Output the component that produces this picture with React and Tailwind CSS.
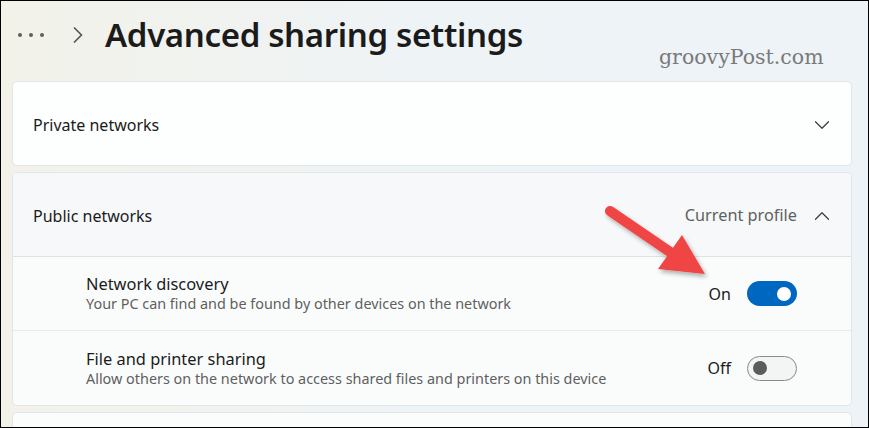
import { ChevronDown, ChevronUp, ChevronRight } from 'lucide-react';

const font = { fontFamily: '"Noto Sans", "Open Sans", sans-serif' };

function Toggle({ on }) {
  if (on) {
    return (
      <div className="flex h-[25px] w-[50px] items-center justify-end rounded-full bg-[#0067c0] pr-[6px]">
        <div className="h-[14px] w-[14px] rounded-full bg-white" />
      </div>
    );
  }
  return (
    <div className="flex h-[25px] w-[50px] items-center rounded-full border border-[#8a8a8a] bg-[#f3f4f4] pl-[5px]">
      <div className="h-[14px] w-[14px] rounded-full bg-[#5c5c5c]" />
    </div>
  );
}

function SettingRow({ title, desc, state, on, last }) {
  return (
    <div className={`flex h-[74px] items-center pl-[73px] pr-[54px] ${last ? '' : 'border-b border-[#e6e8ea]'}`}>
      <div className="flex-1">
        <p className="text-[16.4px] leading-[21px] text-[#1b1b1b]">{title}</p>
        <p className="text-[14.4px] leading-[20px] text-[#5f5f5f]">{desc}</p>
      </div>
      <span className="mr-[16px] text-[16px] text-[#1b1b1b]">{state}</span>
      <Toggle on={on} />
    </div>
  );
}

export default function App() {
  return (
    <div
      className="relative h-[428px] w-[869px] overflow-hidden border border-black bg-gradient-to-r from-[#f2f2e9] via-[#eef3f6] to-[#edf3f7]"
      style={font}
    >
      {/* header */}
      <div className="flex h-[74px] items-center pb-[6px] pl-[17px]">
        <div className="flex items-center gap-[7px]">
          <span className="h-[4px] w-[4px] rounded-full bg-[#5f5f5f]" />
          <span className="h-[4px] w-[4px] rounded-full bg-[#5f5f5f]" />
          <span className="h-[4px] w-[4px] rounded-full bg-[#5f5f5f]" />
        </div>
        <ChevronRight className="ml-[20px] text-[#555]" size={28} strokeWidth={1.5} />
        <h1 className="ml-[13px] text-[33px] font-semibold tracking-[-0.35px] text-[#1b1b1b]">Advanced sharing settings</h1>
      </div>
      <div
        className="absolute left-[658px] top-[41px] text-[20.5px] text-[#7a7a7a]"
        style={{ fontFamily: '"DejaVu Serif", "Liberation Serif", serif' }}
      >
        groovyPost.com
      </div>

      <div className="flex flex-col gap-[6px] pl-[11px] pr-[16px] pt-[6px]">
        {/* private */}
        <div className="flex h-[85px] items-center justify-between rounded-[5px] border border-[#e3e6e8] bg-[#fdfefe] pl-[20px] pr-[16px] pt-[3px]">
          <span className="text-[16px] text-[#1b1b1b]">Private networks</span>
          <ChevronDown size={26} strokeWidth={1.1} className="text-[#3a3a3a]" />
        </div>

        {/* public */}
        <div className="overflow-hidden rounded-[5px] border border-[#e3e6e8] bg-[#fafcfc]">
          <div className="flex h-[84px] items-center border-b border-[#dfe2e4] bg-[#f6f8f9] pl-[20px] pr-[16px] pt-[2px]">
            <span className="flex-1 text-[16px] text-[#1b1b1b]">Public networks</span>
            <span className="mr-[12px] text-[16.3px] text-[#5f5f5f]">Current profile</span>
            <ChevronUp size={26} strokeWidth={1.1} className="text-[#3a3a3a]" />
          </div>
          <SettingRow
            title="Network discovery"
            desc="Your PC can find and be found by other devices on the network"
            state="On"
            on
          />
          <SettingRow
            title="File and printer sharing"
            desc="Allow others on the network to access shared files and printers on this device"
            state="Off"
            last
          />
        </div>

        <div className="h-[40px] rounded-[5px] border border-[#e3e6e8] bg-[#fbfcfc]" />
      </div>

      {/* red arrow */}
      <svg className="absolute left-0 top-0" width="869" height="428" viewBox="0 0 869 428">
        <defs>
          <filter id="sh" x="-20%" y="-20%" width="140%" height="140%">
            <feDropShadow dx="2" dy="3" stdDeviation="2" floodColor="#000" floodOpacity="0.3" />
          </filter>
        </defs>
        <g filter="url(#sh)" fill="#f04444">
          <line x1="609" y1="210" x2="672" y2="253" stroke="#f04444" strokeWidth="10" strokeLinecap="round" />
          <polygon points="681,234 704,273 657,268" />
        </g>
      </svg>
    </div>
  );
}
